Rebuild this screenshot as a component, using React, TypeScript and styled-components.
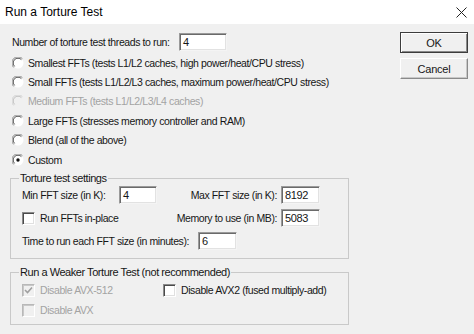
import React from "react";
import styled, { createGlobalStyle } from "styled-components";

const Global = createGlobalStyle`
  html, body { margin: 0; padding: 0; background: #f0f0f0; }
  * { box-sizing: border-box; }
`;

const Window = styled.div`
  width: 474px;
  height: 334px;
  display: flex;
  flex-direction: column;
  background: #f0f0f0;
  font-family: "Liberation Sans", Arial, sans-serif;
  font-size: 10.5px;
  letter-spacing: -0.4px;
  color: #161616;
  overflow: hidden;
`;

const TitleBar = styled.div`
  height: 24px;
  flex: none;
  background: #fff;
  display: flex;
  align-items: center;
  justify-content: space-between;
  padding: 0 7px 0 5px;
  font-size: 12px;
  letter-spacing: 0;
  color: #000;
`;

const Body = styled.div`
  display: flex;
  padding: 9px 6px 0 12px;
`;

const LeftCol = styled.div`
  display: flex;
  flex-direction: column;
  width: 340px;
`;

const ButtonCol = styled.div`
  margin-left: auto;
  margin-top: -1px;
  display: flex;
  flex-direction: column;
  gap: 5px;
`;

const Button = styled.button<{ $default?: boolean }>`
  width: 68px;
  height: 21px;
  font-family: inherit;
  font-size: 11px;
  letter-spacing: -0.2px;
  color: #161616;
  background: #f0f0f0;
  padding: 0;
  border: 1px solid;
  border-color: ${(p) => (p.$default ? "#3c3c3c" : "#fff #8a8a8a #8a8a8a #fff")};
  box-shadow: ${(p) =>
    p.$default
      ? "inset 1px 1px 0 #fff, inset -1px -1px 0 #8a8a8a"
      : "inset -1px -1px 0 #c8c8c8"};
`;

const Row = styled.div<{ $h?: number }>`
  display: flex;
  align-items: center;
  height: ${(p) => p.$h ?? 18}px;
`;

const Label = styled.span<{ $w?: number; $disabled?: boolean }>`
  width: ${(p) => (p.$w ? `${p.$w}px` : "auto")};
  flex: none;
  white-space: nowrap;
  color: ${(p) => (p.$disabled ? "#a3a3a3" : "#161616")};
`;

const Field = styled.div<{ $w: number }>`
  width: ${(p) => p.$w}px;
  height: 18px;
  flex: none;
  background: #fff;
  border: 1px solid;
  border-color: #9a9a9a #f4f4f4 #f4f4f4 #9a9a9a;
  box-shadow: inset 1px 1px 0 #6a6a6a, inset -1px -1px 0 #e2e2e2;
  padding: 0 3px;
  display: flex;
  align-items: center;
  color: #161616;
  font-size: 11px;
`;

const Radios = styled.div`
  display: flex;
  flex-direction: column;
  margin-top: 2px;
`;

const GlyphBox = styled.span`
  width: 16px;
  flex: none;
  display: flex;
  align-items: center;
`;

const Group = styled.fieldset<{ $mt: number }>`
  margin: ${(p) => p.$mt}px 0 0 -2px;
  width: 339px;
  min-width: 0;
  border: 1px solid #c9c9c9;
  padding: 1px 11px 0 11px;
  display: flex;
  flex-direction: column;
`;

const Legend = styled.legend`
  margin-left: -3px;
  padding: 0 1px;
  line-height: 14px;
  height: 14px;
  font-size: 11px;
  letter-spacing: -0.45px;
  color: #161616;
`;

const SizeGrid = styled.div`
  display: grid;
  grid-template-columns: 97px 38px 124px 39px;
  row-gap: 5px;
  align-items: center;
`;

const Cell = styled.div<{ $span?: boolean }>`
  display: flex;
  align-items: center;
  height: 18px;
  grid-column: ${(p) => (p.$span ? "1 / 3" : "auto")};
`;

const CellRight = styled(Cell)`
  justify-content: flex-end;
  padding-right: 4px;
`;

const TimeRow = styled(Row)`
  margin-top: 5px;
  margin-bottom: 8px;
`;

const AvxGrid = styled.div`
  display: grid;
  grid-template-columns: 141px auto;
  grid-auto-rows: 18px;
  row-gap: 2px;
  padding-top: 1px;
  padding-bottom: 5px;
`;

const CheckBoxBox = styled.span<{ $disabled?: boolean }>`
  width: 13px;
  height: 13px;
  flex: none;
  display: inline-flex;
  align-items: center;
  justify-content: center;
  background: ${(p) => (p.$disabled ? "#f0f0f0" : "#fff")};
  border: 1px solid;
  border-color: ${(p) => (p.$disabled ? "#b8b8b8 #fff #fff #b8b8b8" : "#8a8a8a #fff #fff #8a8a8a")};
  box-shadow: ${(p) =>
    p.$disabled
      ? "inset 1px 1px 0 #c8c8c8"
      : "inset 1px 1px 0 #4a4a4a, inset -1px -1px 0 #e0e0e0"};
  margin-right: 5px;
`;

function Radio({ checked, disabled }: { checked?: boolean; disabled?: boolean }) {
  const dark = disabled ? "#c0c0c0" : "#505050";
  const mid = disabled ? "#d0d0d0" : "#8a8a8a";
  return (
    <GlyphBox>
      <svg width="12" height="12" viewBox="0 0 12 12">
        <circle cx="6" cy="6" r="5.5" fill={disabled ? "#f0f0f0" : "#fff"} />
        <path d="M1.6 10.4 A6.1 6.1 0 0 1 10.4 1.6" stroke={mid} strokeWidth="1" fill="none" />
        <path d="M2.6 9.4 A4.8 4.8 0 0 1 9.4 2.6" stroke={dark} strokeWidth="1" fill="none" />
        {checked && <circle cx="6" cy="6" r="1.7" fill="#111" />}
      </svg>
    </GlyphBox>
  );
}

function Check({ checked, disabled }: { checked?: boolean; disabled?: boolean }) {
  return (
    <CheckBoxBox $disabled={disabled}>
      {checked && (
        <svg width="9" height="9" viewBox="0 0 9 9">
          <path d="M1 4 L3.5 6.5 L8 1.5" stroke={disabled ? "#a0a0a0" : "#111"} strokeWidth="1.6" fill="none" />
        </svg>
      )}
    </CheckBoxBox>
  );
}

const radios: { text: string; checked?: boolean; disabled?: boolean }[] = [
  { text: "Smallest FFTs (tests L1/L2 caches, high power/heat/CPU stress)" },
  { text: "Small FFTs (tests L1/L2/L3 caches, maximum power/heat/CPU stress)" },
  { text: "Medium FFTs (tests L1/L2/L3/L4 caches)", disabled: true },
  { text: "Large FFTs (stresses memory controller and RAM)" },
  { text: "Blend (all of the above)" },
  { text: "Custom", checked: true },
];

export default function App() {
  return (
    <Window>
      <Global />
      <TitleBar>
        <span>Run a Torture Test</span>
        <svg width="11" height="11" viewBox="0 0 11 11">
          <path d="M0.5 0.5 L10.5 10.5 M10.5 0.5 L0.5 10.5" stroke="#222" strokeWidth="1" />
        </svg>
      </TitleBar>
      <Body>
        <LeftCol>
          <Row>
            <Label $w={167}>Number of torture test threads to run:</Label>
            <Field $w={48}>4</Field>
          </Row>
          <Radios>
            {radios.map((r) => (
              <Row key={r.text} $h={19.4}>
                <Radio checked={r.checked} disabled={r.disabled} />
                <Label $disabled={r.disabled}>{r.text}</Label>
              </Row>
            ))}
          </Radios>
          <Group $mt={2}>
            <Legend>Torture test settings</Legend>
            <SizeGrid>
              <Cell>Min FFT size (in K):</Cell>
              <Cell>
                <Field $w={38}>4</Field>
              </Cell>
              <CellRight>Max FFT size (in K):</CellRight>
              <Cell>
                <Field $w={39}>8192</Field>
              </Cell>
              <Cell $span>
                <Check />
                Run FFTs in-place
              </Cell>
              <CellRight>Memory to use (in MB):</CellRight>
              <Cell>
                <Field $w={39}>5083</Field>
              </Cell>
            </SizeGrid>
            <TimeRow>
              <Label $w={176}>Time to run each FFT size (in minutes):</Label>
              <Field $w={39}>6</Field>
            </TimeRow>
          </Group>
          <Group $mt={6}>
            <Legend>Run a Weaker Torture Test (not recommended)</Legend>
            <AvxGrid>
              <Cell>
                <Check checked disabled />
                <Label $disabled>Disable AVX-512</Label>
              </Cell>
              <Cell>
                <Check />
                <Label>Disable AVX2 (fused multiply-add)</Label>
              </Cell>
              <Cell>
                <Check disabled />
                <Label $disabled>Disable AVX</Label>
              </Cell>
            </AvxGrid>
          </Group>
        </LeftCol>
        <ButtonCol>
          <Button $default>OK</Button>
          <Button>Cancel</Button>
        </ButtonCol>
      </Body>
    </Window>
  );
}
